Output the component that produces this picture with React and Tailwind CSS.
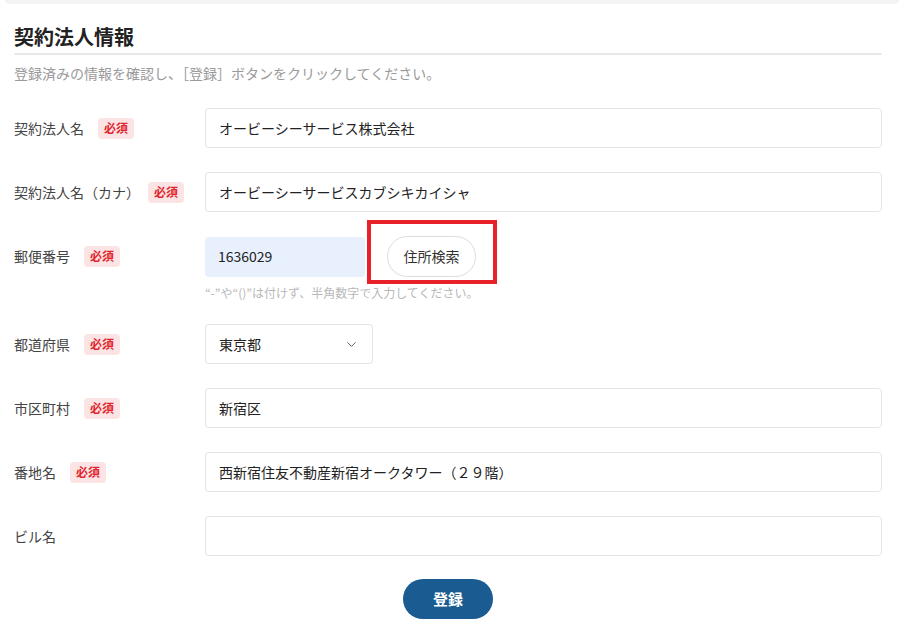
import { ChevronDown } from "lucide-react";

const rows = [
  { label: "契約法人名", required: true, value: "オービーシーサービス株式会社" },
  { label: "契約法人名（カナ）", required: true, value: "オービーシーサービスカブシキカイシャ", tight: true },
];

function Badge({ tight }) {
  return (
    <span
      className={`${tight ? "ml-[8px]" : "ml-[14px]"} inline-flex h-[21px] items-center rounded-[4px] bg-[#fde4e4] px-[6px] text-[12px] font-bold text-[#e0262f]`}
    >
      必須
    </span>
  );
}

function Label({ text, required, tight }) {
  return (
    <div className="flex h-10 w-[191px] shrink-0 items-center text-[14px] text-[#444]">
      <span>{text}</span>
      {required && <Badge tight={tight} />}
    </div>
  );
}

function TextInput({ value }) {
  return (
    <div className="flex h-10 flex-1 items-center rounded-[4px] border border-[#e4e4e4] bg-white px-[13px] text-[14px] text-[#222]">
      {value}
    </div>
  );
}

export default function App() {
  return (
    <div
      className="relative min-h-[642px] w-[904px] bg-white"
      style={{ fontFamily: '"Noto Sans CJK JP", "Noto Sans", sans-serif' }}
    >
      <div className="mx-[5px] h-[4px] rounded-b-[6px] bg-[#f4f4f4]" />
      <div className="px-[14px] pr-[22px] pt-[20px]">
        <h2 className="border-b-2 border-[#e8e8e8] pb-[3px] text-[20px] font-bold leading-[26px] text-[#222]">
          契約法人情報
        </h2>
        <p className="mt-[8px] text-[14px] text-[#9a9a9a]">
          登録済みの情報を確認し、［登録］ボタンをクリックしてください。
        </p>

        <div className="mt-[24px] flex flex-col gap-6">
          {rows.map((r) => (
            <div key={r.label} className="flex items-center">
              <Label text={r.label} required={r.required} tight={r.tight} />
              <TextInput value={r.value} />
            </div>
          ))}

          <div className="flex">
            <Label text="郵便番号" required />
            <div className="flex flex-col">
              <div className="flex items-center">
                <div className="flex h-10 w-[160px] items-center rounded-[4px] bg-[#e8f0fe] px-[13px] text-[14px] text-[#222]">
                  1636029
                </div>
                <button className="relative ml-[22px] h-[41px] w-[89px] rounded-full border border-[#dcdcdc] bg-white text-[14px] text-[#333]">
                  住所検索
                  <span className="pointer-events-none absolute left-[-21px] top-[-17px] h-[64px] w-[130px] border-[4px] border-[#e8202a]" />
                </button>
              </div>
              <p className="mt-[7px] text-[12px] leading-[17px] text-[#b8b8b8]">
                “-”や“()”は付けず、半角数字で入力してください。
              </p>
            </div>
          </div>

          <div className="-mt-[1px] flex items-center">
            <Label text="都道府県" required />
            <div className="flex h-10 w-[168px] items-center justify-between rounded-[4px] border border-[#e4e4e4] px-[13px] text-[14px] text-[#222]">
              <span>東京都</span>
              <ChevronDown size={15} strokeWidth={1.5} className="text-[#555]" />
            </div>
          </div>

          <div className="flex items-center">
            <Label text="市区町村" required />
            <TextInput value="新宿区" />
          </div>

          <div className="flex items-center">
            <Label text="番地名" required />
            <TextInput value="西新宿住友不動産新宿オークタワー（２９階）" />
          </div>

          <div className="flex items-center">
            <Label text="ビル名" />
            <TextInput value="" />
          </div>
        </div>

        <div className="mt-[23px] flex justify-center">
          <button className="h-10 w-[90px] rounded-full bg-[#1a5c92] text-[15px] font-bold text-white">
            登録
          </button>
        </div>
      </div>
    </div>
  );
}
